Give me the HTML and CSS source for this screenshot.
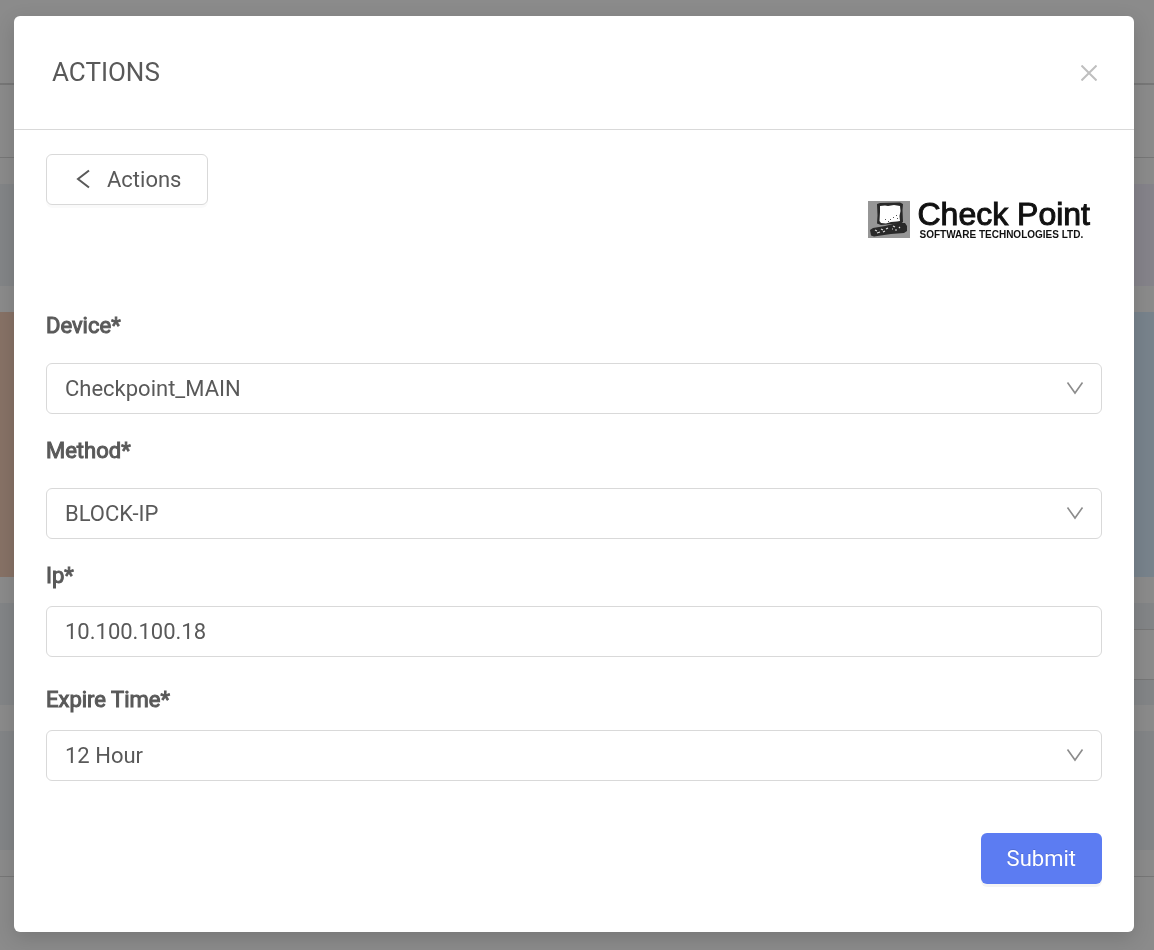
FILE: index.html
```html
<!DOCTYPE html>
<html lang="en">
<head>
<meta charset="utf-8">
<title>Actions</title>
<link rel="stylesheet" href="styles.css">
</head>
<body>
<div class="backdrop" aria-hidden="true">
  <div class="band band-top"></div>
  <div class="band band-nav"></div>
  <div class="band gap"></div>
  <div class="band band-stats"><i class="slate"></i><i class="violet"></i></div>
  <div class="band gap"></div>
  <div class="band band-charts"><i class="orange"></i><i class="blue"></i></div>
  <div class="band gap"></div>
  <div class="band band-table"><i class="slate"></i><i class="slate table-cell"><b></b></i></div>
  <div class="band gap"></div>
  <div class="band band-panel"><i class="slate"></i><i class="slate"></i></div>
  <div class="band band-end"></div>
</div>
<main class="modal" role="dialog" aria-labelledby="title">
  <header class="modal-header">
    <h1 class="modal-title" id="title">ACTIONS</h1>
    <button class="close" type="button" aria-label="Close">
      <svg width="16" height="16" viewBox="0 0 16 16"><path d="M.5 .5l15 15M15.500 .5L.5 15.500"/></svg>
    </button>
  </header>
  <form class="modal-body">
    <div class="top-row">
      <button class="back" type="button">
        <svg width="14" height="22" viewBox="0 0 14 22"><path d="M13 1.500L2 10l11 8.500"/></svg>
        <span>Actions</span>
      </button>
      <div class="brand">
        <svg class="brand-mark" width="42" height="37" viewBox="0 0 42 37">
          <path fill="#969696" d="M0 0h42v37H0z"/>
          <path fill="#292929" d="M9 3l3-1 20-.5 3 1.500-.5 6 .5 12-2 1.500-9 .5-11 1-4-1.500 .5-8z"/>
          <path fill="#fff" d="M12 5l5-.5 3 .5 6-1 6 1 .5 5-1 5 .5 5-3 .5-6 .5-5 1.500-5-.5-1.500-2 .5-9z"/>
          <path fill="#292929" d="M2 29l3-2 12-2 12-3 8 0 2 3 0 5-3 2-13 1-17 2.500-3-1z"/>
          <path fill="#555" d="M17 18h1v1h-1zM22 18h1v1h-1zM28 14h1v1h-1zM25 16h1v1h-1zM20 20h1v1h-1zM29 17h1v1h-1z"/>
          <path stroke="#ddd" stroke-width="1.200" fill="none" d="M7 29l2 1M9 32l3-1M13 28l2 1M15 31l2-1M18 28l2-1M25 25l2 1M27 29l2 0M31 26l1 1M24 28l1 0"/>
        </svg>
        <div class="brand-text">
          <span class="brand-name">Check Point</span>
          <span class="brand-sub">SOFTWARE TECHNOLOGIES LTD.</span>
        </div>
      </div>
    </div>
    <div class="field roomy">
      <label for="device">Device*</label>
      <div class="select-wrap">
        <select id="device"><option>Checkpoint_MAIN</option></select>
        <svg class="arrow" width="18" height="14" viewBox="0 0 18 14"><path d="M1.500 1.500L9 12 16.500 1.500"/></svg>
      </div>
    </div>
    <div class="field roomy">
      <label for="method">Method*</label>
      <div class="select-wrap">
        <select id="method"><option>BLOCK-IP</option></select>
        <svg class="arrow" width="18" height="14" viewBox="0 0 18 14"><path d="M1.500 1.500L9 12 16.500 1.500"/></svg>
      </div>
    </div>
    <div class="field">
      <label for="ip">Ip*</label>
      <input id="ip" type="text" value="10.100.100.18">
    </div>
    <div class="field">
      <label for="expire">Expire Time*</label>
      <div class="select-wrap">
        <select id="expire"><option>12 Hour</option></select>
        <svg class="arrow" width="18" height="14" viewBox="0 0 18 14"><path d="M1.500 1.500L9 12 16.500 1.500"/></svg>
      </div>
    </div>
    <div class="footer"><button class="submit" type="submit">Submit</button></div>
  </form>
</main>
</body>
</html>
```
FILE: styles.css
```css
* { box-sizing: border-box; }
body {
  margin: 0;
  min-height: 100vh;
  background: #8b8b8b;
  color: #595959;
  font: 22px/32px Roboto, sans-serif;
}
button, input, select { font: inherit; color: inherit; }

.backdrop {
  position: fixed;
  inset: 0;
  z-index: -1;
  display: flex;
  flex-direction: column;
  background: #8b8b8b;
}
.band { display: flex; flex: none; }
.band > i { flex: 1; }
.band-top { height: 85px; border-bottom: 2px solid #777; }
.band-nav { height: 73px; border-bottom: 1px solid #777; }
.gap { height: 26px; }
.band-stats { height: 102px; }
.band-charts { height: 265px; }
.band-table { height: 102px; }
.band-panel { height: 119px; }
.band-end { height: 27px; border-bottom: 1px solid #777; }
.slate { background: #838587; }
.violet { background: #85838a; }
.orange { background: #877266; }
.blue { background: #78838c; }
.table-cell { padding: 26px 0 25px; }
.table-cell b {
  display: block;
  height: 100%;
  background: #8b8b8b;
  border: solid #777;
  border-width: 1px 0;
}

.modal {
  margin: 16px 20px 18px 14px;
  background: #fff;
  border-radius: 6px;
  box-shadow: 0 6px 20px rgba(0, 0, 0, .15);
}
.modal-header {
  display: flex;
  align-items: center;
  justify-content: space-between;
  height: 114px;
  padding: 0 32px 0 38px;
  border-bottom: 1px solid #d9d9d9;
}
.modal-title { margin: 0; padding-bottom: 2px; font-size: 26px; font-weight: 400; }
.close {
  display: flex;
  padding: 5px;
  border: 0;
  background: none;
}
.close path { stroke: #bfbfbf; stroke-width: 2; }
.modal-body { padding: 24px 32px 48px; }
.top-row {
  display: flex;
  align-items: flex-start;
  justify-content: space-between;
  height: 156px;
}
.back {
  display: flex;
  align-items: center;
  gap: 17px;
  height: 51px;
  padding: 0 26px 0 29px;
  background: #fff;
  border: 1px solid #d9d9d9;
  border-radius: 6px;
  box-shadow: 0 3px 0 rgba(0, 0, 0, .02);
}
.back path, .arrow path { fill: none; stroke: #595959; stroke-width: 2; }
.brand { display: flex; gap: 7px; padding: 46px 12px 0 0; }
.brand-mark { margin-top: 1px; }
.brand-text {
  display: flex;
  flex-direction: column;
  color: #111;
  font-family: "Liberation Sans", Arial, sans-serif;
}
.brand-name { font-size: 32px; line-height: 29px; -webkit-text-stroke: 1px #111; }
.brand-sub { padding-left: 2px; font-size: 10px; font-weight: 700; line-height: 12px; }

.field { display: flex; flex-direction: column; gap: 14px; margin-bottom: 27px; }
.field.roomy { gap: 21px; margin-bottom: 21px; }
.field label { -webkit-text-stroke: 1px #595959; }
.field input, .field select {
  width: 100%;
  height: 51px;
  padding: 0 18px;
  background: #fff;
  border: 1px solid #d9d9d9;
  border-radius: 6px;
  appearance: none;
}
.select-wrap { position: relative; display: flex; }
.arrow { position: absolute; right: 18px; top: 18px; pointer-events: none; }
.arrow path { stroke: #8c8c8c; stroke-width: 1.6; }

.footer { display: flex; justify-content: flex-end; padding-top: 25px; }
.submit {
  height: 51px;
  padding: 0 26px;
  background: #5c7cf2;
  border: 0;
  border-radius: 6px;
  color: #fff;
  text-shadow: 0 -1px 0 rgba(0, 0, 0, .12);
  box-shadow: 0 3px 0 rgba(0, 0, 0, .045);
}
```
